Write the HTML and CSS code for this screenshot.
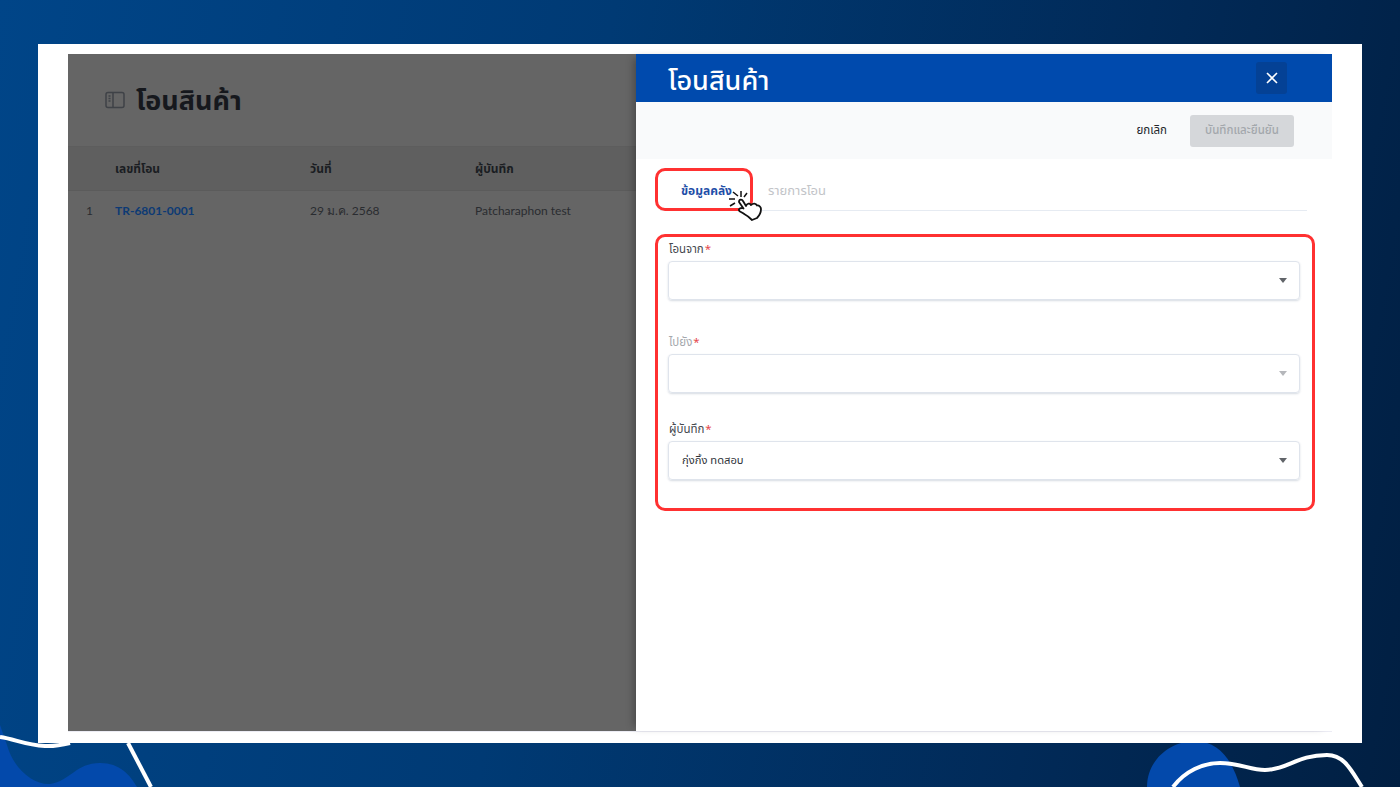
FILE: index.html
```html
<!DOCTYPE html>
<html lang="th">
<head>
<meta charset="utf-8">
<title>โอนสินค้า</title>
<link rel="stylesheet" href="styles.css">
</head>
<body>
<svg class="deco" viewBox="0 0 1400 787" width="1400" height="787" aria-hidden="true">
  <path class="blob" d="M0 725 L7 745 C14 770 34 785 50 784 C70 781 76 763 100 763 C120 763 130 775 137 787 L0 787Z"/>
  <path class="blob" d="M1147 787 C1147 760 1170 741 1195 741 C1220 741 1233 762 1240 787Z"/>
  <path class="line" d="M0 737 C15 739 25 745 45 746 C55 746.500 62 745 70 743"/>
  <path class="line" d="M128 743 L151 787"/>
  <path class="line" d="M1173 787 C1185 771 1203 763 1220 763 C1240 763 1250 770 1265 770 C1287 770 1297 755 1327 755 C1345 755 1352 772 1362 787"/>
</svg>
<main class="frame">
  <div class="app">
    <section class="list">
      <div class="list-head">
        <svg class="page-icon" viewBox="0 0 20 18" width="20" height="18" aria-hidden="true">
          <rect x="1" y="1.500" width="18" height="15" rx="2"/>
          <path d="M8 1.500V16.500M3.500 5H5.500M3.500 7.500H5.500M3.500 10H5.500"/>
        </svg>
        <h1 class="list-title">โอนสินค้า</h1>
      </div>
      <div class="row row-head">
        <span class="c-no"></span>
        <span class="c-code">เลขที่โอน</span>
        <span class="c-date">วันที่</span>
        <span class="c-user">ผู้บันทึก</span>
      </div>
      <div class="row row-body">
        <span class="c-no">1</span>
        <span class="c-code link">TR-6801-0001</span>
        <span class="c-date">29 ม.ค. 2568</span>
        <span class="c-user">Patcharaphon test</span>
      </div>
    </section>
    <section class="drawer">
      <header class="drawer-head">
        <h2 class="drawer-title">โอนสินค้า</h2>
        <button class="close" type="button" aria-label="ปิด">
          <svg viewBox="0 0 12 12" width="12" height="12" aria-hidden="true"><path d="M1 1L11 11M11 1L1 11"/></svg>
        </button>
      </header>
      <div class="toolbar">
        <span class="cancel">ยกเลิก</span>
        <span class="save">บันทึกและยืนยัน</span>
      </div>
      <div class="body">
        <nav class="tabs">
          <span class="tab active">ข้อมูลคลัง</span>
          <span class="tab">รายการโอน</span>
        </nav>
        <form class="fields">
          <div class="field f1">
            <label class="label">โอนจาก<em>*</em></label>
            <div class="select"><span class="caret"></span></div>
          </div>
          <div class="field f2 off">
            <label class="label">ไปยัง<em>*</em></label>
            <div class="select"><span class="caret"></span></div>
          </div>
          <div class="field f3">
            <label class="label">ผู้บันทึก<em>*</em></label>
            <div class="select"><span class="value">กุ่งกิ้ง ทดสอบ</span><span class="caret"></span></div>
          </div>
        </form>
        <div class="mark mark-tab"></div>
        <div class="mark mark-form"></div>
        <svg class="hand" viewBox="0 0 36 34" width="36" height="34" aria-hidden="true">
          <path class="burst" d="M5 5L10 9M13 4V10M19 6L16 10M1 12H7M2 19L7 16"/>
          <path class="palm" d="M11 15C11 12 14 12 15 14L18 19C19 16 22 16 23 18C25 16 28 16 29 18.500C31 18 33 20 33 22C33 26 31 29 29 31L24 33C22 31 20 29 17 27.500C15 26 13 25 12 24.500C10 23 11 21 14 21L15.500 21.500Z"/>
        </svg>
      </div>
    </section>
  </div>
</main>
</body>
</html>
```
FILE: styles.css
```css
* { box-sizing: border-box; }
html, body { margin: 0; height: 100%; }
body {
  width: 1400px;
  height: 787px;
  overflow: hidden;
  padding: 44px 38px;
  position: relative;
  font-family: "Noto Sans", "Noto Sans Thai", "Lato", sans-serif;
  background: linear-gradient(100deg, #004588 0%, #003a74 40%, #012a58 75%, #011f42 100%);
}
.deco { position: absolute; left: 0; top: 0; }
.blob { fill: #0349ab; }
.line { fill: none; stroke: #fff; stroke-width: 4; }

.frame {
  position: relative;
  height: 699px;
  background: #fff;
  padding: 10px 30px 11px;
}
.app { display: flex; height: 100%; border-bottom: 1px solid #ececf4; }

.list { width: 568px; background: #656565; color: #1a1d22; }
.list-head { height: 92px; display: flex; align-items: center; gap: 11px; padding: 0 0 0 37px; }
.page-icon { fill: none; stroke: #3f4247; stroke-width: 1.500; }
.list-title { margin: 0 0 2px; font-size: 27px; font-weight: 700; line-height: 1; color: #16181d; }
.row { display: flex; align-items: center; font-size: 12px; }
.row-head { height: 45px; background: #5f5f5f; font-weight: 700; border-top: 1px solid #5d5d5d; border-bottom: 1px solid #5b5b5b; }
.row-body { height: 39px; color: #2a2c30; font-family: "Lato", "Noto Sans", sans-serif; font-size: 12px; }
.c-no { width: 47px; padding-left: 18px; }
.c-code { width: 195px; }
.c-date { width: 165px; }
.link { color: #0d3a74; font-weight: 700; }

.drawer { position: relative; width: 696px; background: #fff; display: flex; flex-direction: column; box-shadow: -6px 0 8px -4px rgba(0,0,0,.3); }
.drawer-head { height: 48px; background: #004aad; display: flex; align-items: center; justify-content: space-between; padding: 0 45px 0 32px; }
.drawer-title { margin: 2px 0 0; color: #fff; font-size: 27px; font-weight: 500; line-height: 1; }
.close { width: 31px; height: 32px; border: 0; padding: 0; border-radius: 3px; background: #044195; display: flex; align-items: center; justify-content: center; }
.close path { fill: none; stroke: #fff; stroke-width: 1.600; }
.toolbar { height: 57px; background: #f9fafb; display: flex; align-items: center; justify-content: flex-end; gap: 23px; padding: 0 38px 0 0; font-size: 11.500px; }
.cancel { color: #23252a; }
.save { width: 104px; height: 32px; border-radius: 3px; background: #d5d7da; color: #a3a7ac; display: flex; align-items: center; justify-content: center; font-weight: 500; }

.body { position: relative; flex: 1; padding: 11px 25px 0 24px; }
.tabs { display: flex; height: 41px; border-bottom: 1px solid #e6ebf2; align-items: center; gap: 36px; padding: 1px 0 0 21px; font-size: 13px; }
.tab { color: #c2c4c8; }
.tab.active { color: #1f4fa8; font-weight: 700; font-size: 12px; }

.fields { padding: 29px 6px 0 8px; margin-right: 1px; }
.field { display: block; }
.f2 { margin-top: 33px; }
.f3 { margin-top: 27px; }
.label { display: block; height: 21px; padding-left: 1px; font-size: 11.500px; line-height: 18px; color: #45484e; }
.label em { color: #e5484d; font-style: normal; margin-left: 1px; }
.off .label { color: #a5a8ad; }
.select { height: 39px; border: 1px solid #dfe4ec; border-radius: 4px; box-shadow: 0 1px 2px rgba(120,135,160,.3); display: flex; align-items: center; justify-content: space-between; padding: 0 12px 0 13px; }
.value { font-size: 11.200px; color: #30333a; }
.caret { margin-left: auto; width: 0; height: 0; border-left: 4.500px solid transparent; border-right: 4.500px solid transparent; border-top: 5px solid #616469; }
.off .caret { border-top-color: #b5b7bb; }

.mark { position: absolute; border: 3px solid #ff3131; }
.mark-tab { left: 19px; top: 9px; width: 98px; height: 43px; border-radius: 10px; }
.mark-form { left: 19px; top: 75px; width: 660px; height: 277px; border-radius: 10px; }
.hand { position: absolute; left: 92px; top: 28px; }
.burst { fill: none; stroke: #111; stroke-width: 1.500; }
.palm { fill: #fff; stroke: #111; stroke-width: 1.800; stroke-linejoin: round; }
```
